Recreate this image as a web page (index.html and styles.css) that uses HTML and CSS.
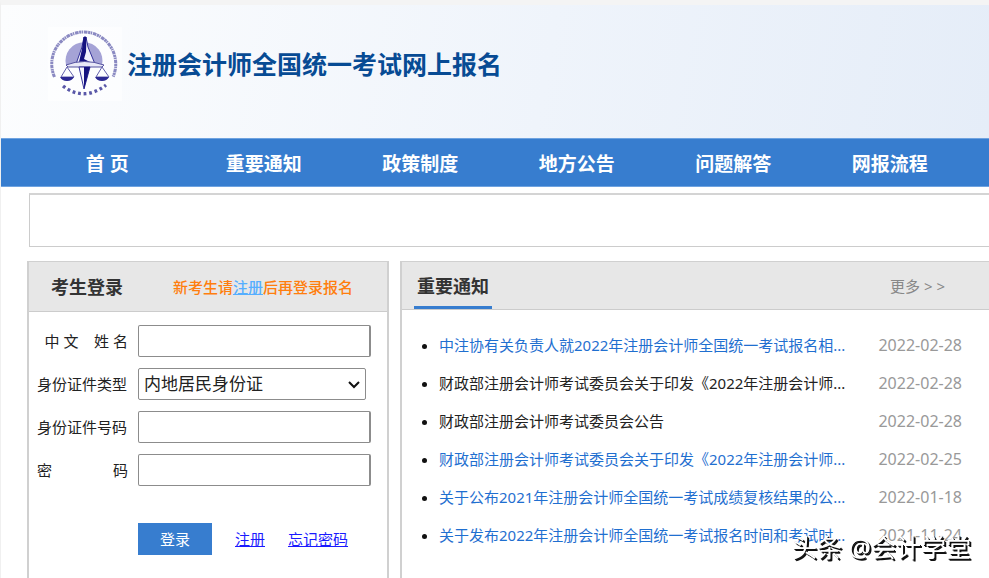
FILE: index.html
```html
<!DOCTYPE html>
<html lang="zh-CN">
<head>
<meta charset="utf-8">
<title>注册会计师全国统一考试网上报名</title>
<link rel="stylesheet" href="styles.css">
</head>
<body>
<header class="banner">
  <svg class="logo" viewBox="0 0 74 74" aria-hidden="true">
    <rect width="74" height="74" fill="#fff" opacity=".55"/>
    <g fill="none" stroke="#5a58a8">
      <path d="M6.500 50A32 32 0 1 1 65 50" stroke-width="3" stroke-dasharray="3.600 .6 2.200 .5 1.400 .8" opacity=".7"/>
      <path d="M15 59Q36 75 58 58" stroke-width="3.400" stroke-dasharray="2.800 2.800"/>
    </g>
    <path d="M18 38A18.500 18.500 0 1 1 54 38Z" fill="#a5a3d6"/>
    <path d="M28 37L34 20L36 10L38 10L40 20L47 37Z" fill="#f1f1fb" stroke="#34329a"/>
    <path d="M35.500 10H38.500L38 25L36 32L42 35H31L34 22Z" fill="#15127f"/>
    <path d="M18 38Q36 31 56 38L54 40H20Z" fill="#e8e8f7" stroke="#55529f"/>
    <path d="M31 40L36 62L42 40Z" fill="#f5f5fc" stroke="#34329a"/>
    <path d="M36 40H42L36 62Z" fill="#15127f"/>
    <g fill="none" stroke="#6260ac"><path d="M19 40L13 50H26ZM54 40L48 50H61Z"/></g>
    <path d="M12 50H26Q24 54 19 54Q14 54 12 50ZM47 50H61Q59 54 54 54Q49 54 47 50Z" fill="#2c2993"/>
  </svg>
  <h1 class="site-title">注册会计师全国统一考试网上报名</h1>
</header>
<nav class="nav">
  <a href="#">首 页</a><a href="#">重要通知</a><a href="#">政策制度</a><a href="#">地方公告</a><a href="#">问题解答</a><a href="#">网报流程</a>
</nav>
<div class="notice-strip"></div>
<main class="content">
  <section class="panel">
    <div class="panel-head login-head">
      <h2>考生登录</h2>
      <p class="tip">新考生请<a href="#">注册</a>后再登录报名</p>
    </div>
    <form class="login-form">
      <label class="spaced" for="name">中 文    姓 名</label><input id="name" type="text">
      <label for="kind">身份证件类型</label>
      <div class="select-wrap">
        <select id="kind"><option>内地居民身份证</option></select>
        <svg class="chevron" viewBox="0 0 12 8" aria-hidden="true"><path d="M1 1L6 6L11 1"/></svg>
      </div>
      <label for="number">身份证件号码</label><input id="number" type="text">
      <label class="justified" for="pass">密 码</label><input id="pass" type="password">
      <div class="actions">
        <button type="button">登录</button><a href="#">注册</a><a href="#">忘记密码</a>
      </div>
    </form>
  </section>
  <section class="panel news">
    <div class="panel-head news-head">
      <h2>重要通知</h2>
      <a class="more" href="#">更多 &gt; &gt;</a>
    </div>
    <ul class="news-list">
      <li><a href="#">中注协有关负责人就2022年注册会计师全国统一考试报名相...</a><time>2022-02-28</time></li>
      <li><a class="read" href="#">财政部注册会计师考试委员会关于印发《2022年注册会计师...</a><time>2022-02-28</time></li>
      <li><a class="read" href="#">财政部注册会计师考试委员会公告</a><time>2022-02-28</time></li>
      <li><a href="#">财政部注册会计师考试委员会关于印发《2022年注册会计师...</a><time>2022-02-25</time></li>
      <li><a href="#">关于公布2021年注册会计师全国统一考试成绩复核结果的公...</a><time>2022-01-18</time></li>
      <li><a href="#">关于发布2022年注册会计师全国统一考试报名时间和考试时...</a><time>2021-11-24</time></li>
    </ul>
  </section>
</main>
<div class="watermark">头条 @会计学堂</div>
</body>
</html>
```
FILE: styles.css
```css
* { box-sizing: border-box; }
body {
  margin: 0;
  min-height: 100vh;
  display: flex;
  flex-direction: column;
  border-top: 5px solid #f4f4f4;
  border-left: 1px solid #f0f0f0;
  background: #fff;
  color: #222;
  font: 15px/20px "Noto Sans", "Noto Sans CJK SC", sans-serif;
  overflow: hidden;
}
h1, h2, p, ul { margin: 0; padding: 0; }

.banner {
  display: flex;
  align-items: flex-start;
  gap: 5px;
  height: 133px;
  padding: 22px 47px;
  background: linear-gradient(100deg, #fcfdfe 0%, #eff4fb 55%, #e5edf8 100%);
}
.logo { width: 74px; height: 74px; flex: none; }
.site-title {
  color: #074b94;
  font-size: 25px;
  line-height: 74px;
  font-weight: 700;
  white-space: nowrap;
}

.nav {
  display: grid;
  grid-template-columns: repeat(6, 1fr);
  padding: 1px 21px 0 28px;
  background: #377dcf;
  border-top: 1px solid #6fa3e0;
  border-bottom: 1px solid #6fa3e0;
}
.nav a {
  color: #fff;
  font-size: 19px;
  line-height: 48px;
  height: 46px;
  font-weight: 700;
  text-align: center;
  text-decoration: none;
}

.notice-strip {
  height: 54px;
  margin: 6px 0 14px 28px;
  border: 1px solid #ccc;
  border-top: 2px solid #d4d4d4;
  border-right: 0;
}

.content {
  flex: 1;
  display: grid;
  grid-template-columns: 362px 1fr;
  gap: 11px;
  padding-left: 26px;
}
.panel {
  border: 2px solid #d0d0d0;
  border-top-width: 1px;
  border-bottom: 0;
}
.news { border-right: 0; }
.panel-head {
  display: flex;
  align-items: center;
  justify-content: space-between;
  background: #e7e7e7;
  border-bottom: 1px solid #ccc;
}
.panel-head h2 {
  color: #333;
  font-size: 18px;
  line-height: 24px;
  font-weight: 700;
}
.login-head { height: 50px; padding: 0 34px 0 22px; }
.tip { color: #ff7e0e; font-weight: 500; }
.tip a { color: #55aeff; }
.news-head { height: 48px; padding: 0 44px 0 12px; }
.news-head h2 {
  height: 47px;
  padding: 0 3px;
  line-height: 48px;
  border-bottom: 3px solid #377dcf;
}
.more { color: #888; text-decoration: none; }

.login-form {
  display: grid;
  grid-template-columns: 91px 233px;
  grid-auto-rows: 32px;
  gap: 11px 10px;
  align-items: center;
  padding: 13px 8px;
}
.login-form label { white-space: nowrap; }
.login-form .spaced { text-align: right; white-space: pre; }
.login-form .justified { text-align-last: justify; }
.login-form input, .login-form select {
  width: 100%;
  height: 32px;
  margin: 0;
  background: #fff;
  border: 1px solid #8c8c8c;
  border-radius: 2px;
  color: #222;
  font: inherit;
}
.login-form input { border-right-width: 2px; }
.select-wrap { position: relative; width: 228px; }
.login-form select {
  display: block;
  appearance: none;
  padding: 0 5px;
  font-size: 17px;
}
.chevron {
  position: absolute;
  right: 6px;
  top: 13px;
  width: 12px;
  height: 8px;
  fill: none;
  stroke: #111;
  stroke-width: 2;
  pointer-events: none;
}
.actions {
  grid-column: 2;
  display: flex;
  align-items: center;
  gap: 23px;
  margin-top: 52px;
}
.actions button {
  width: 74px;
  height: 32px;
  padding: 0;
  flex: none;
  border: 0;
  background: #377dcf;
  color: #fff;
  font: inherit;
}
.actions a { color: #1a1aff; white-space: nowrap; }

.news-list { padding: 16px 27px 0 37px; }
.news-list li {
  line-height: 38px;
  color: #111;
}
.news-list a {
  color: #1f6fd0;
  text-decoration: none;
  white-space: nowrap;
}
.news-list .read { color: #222; }
.news-list time {
  float: right;
  color: #999;
  font-size: 16px;
}

.watermark {
  position: fixed;
  right: 18px;
  bottom: 14px;
  color: #fff;
  font-size: 25px;
  line-height: 34px;
  font-weight: 400;
  text-shadow: 1px 1px 0 #111, 2px 2px 0 #111;
}
```
